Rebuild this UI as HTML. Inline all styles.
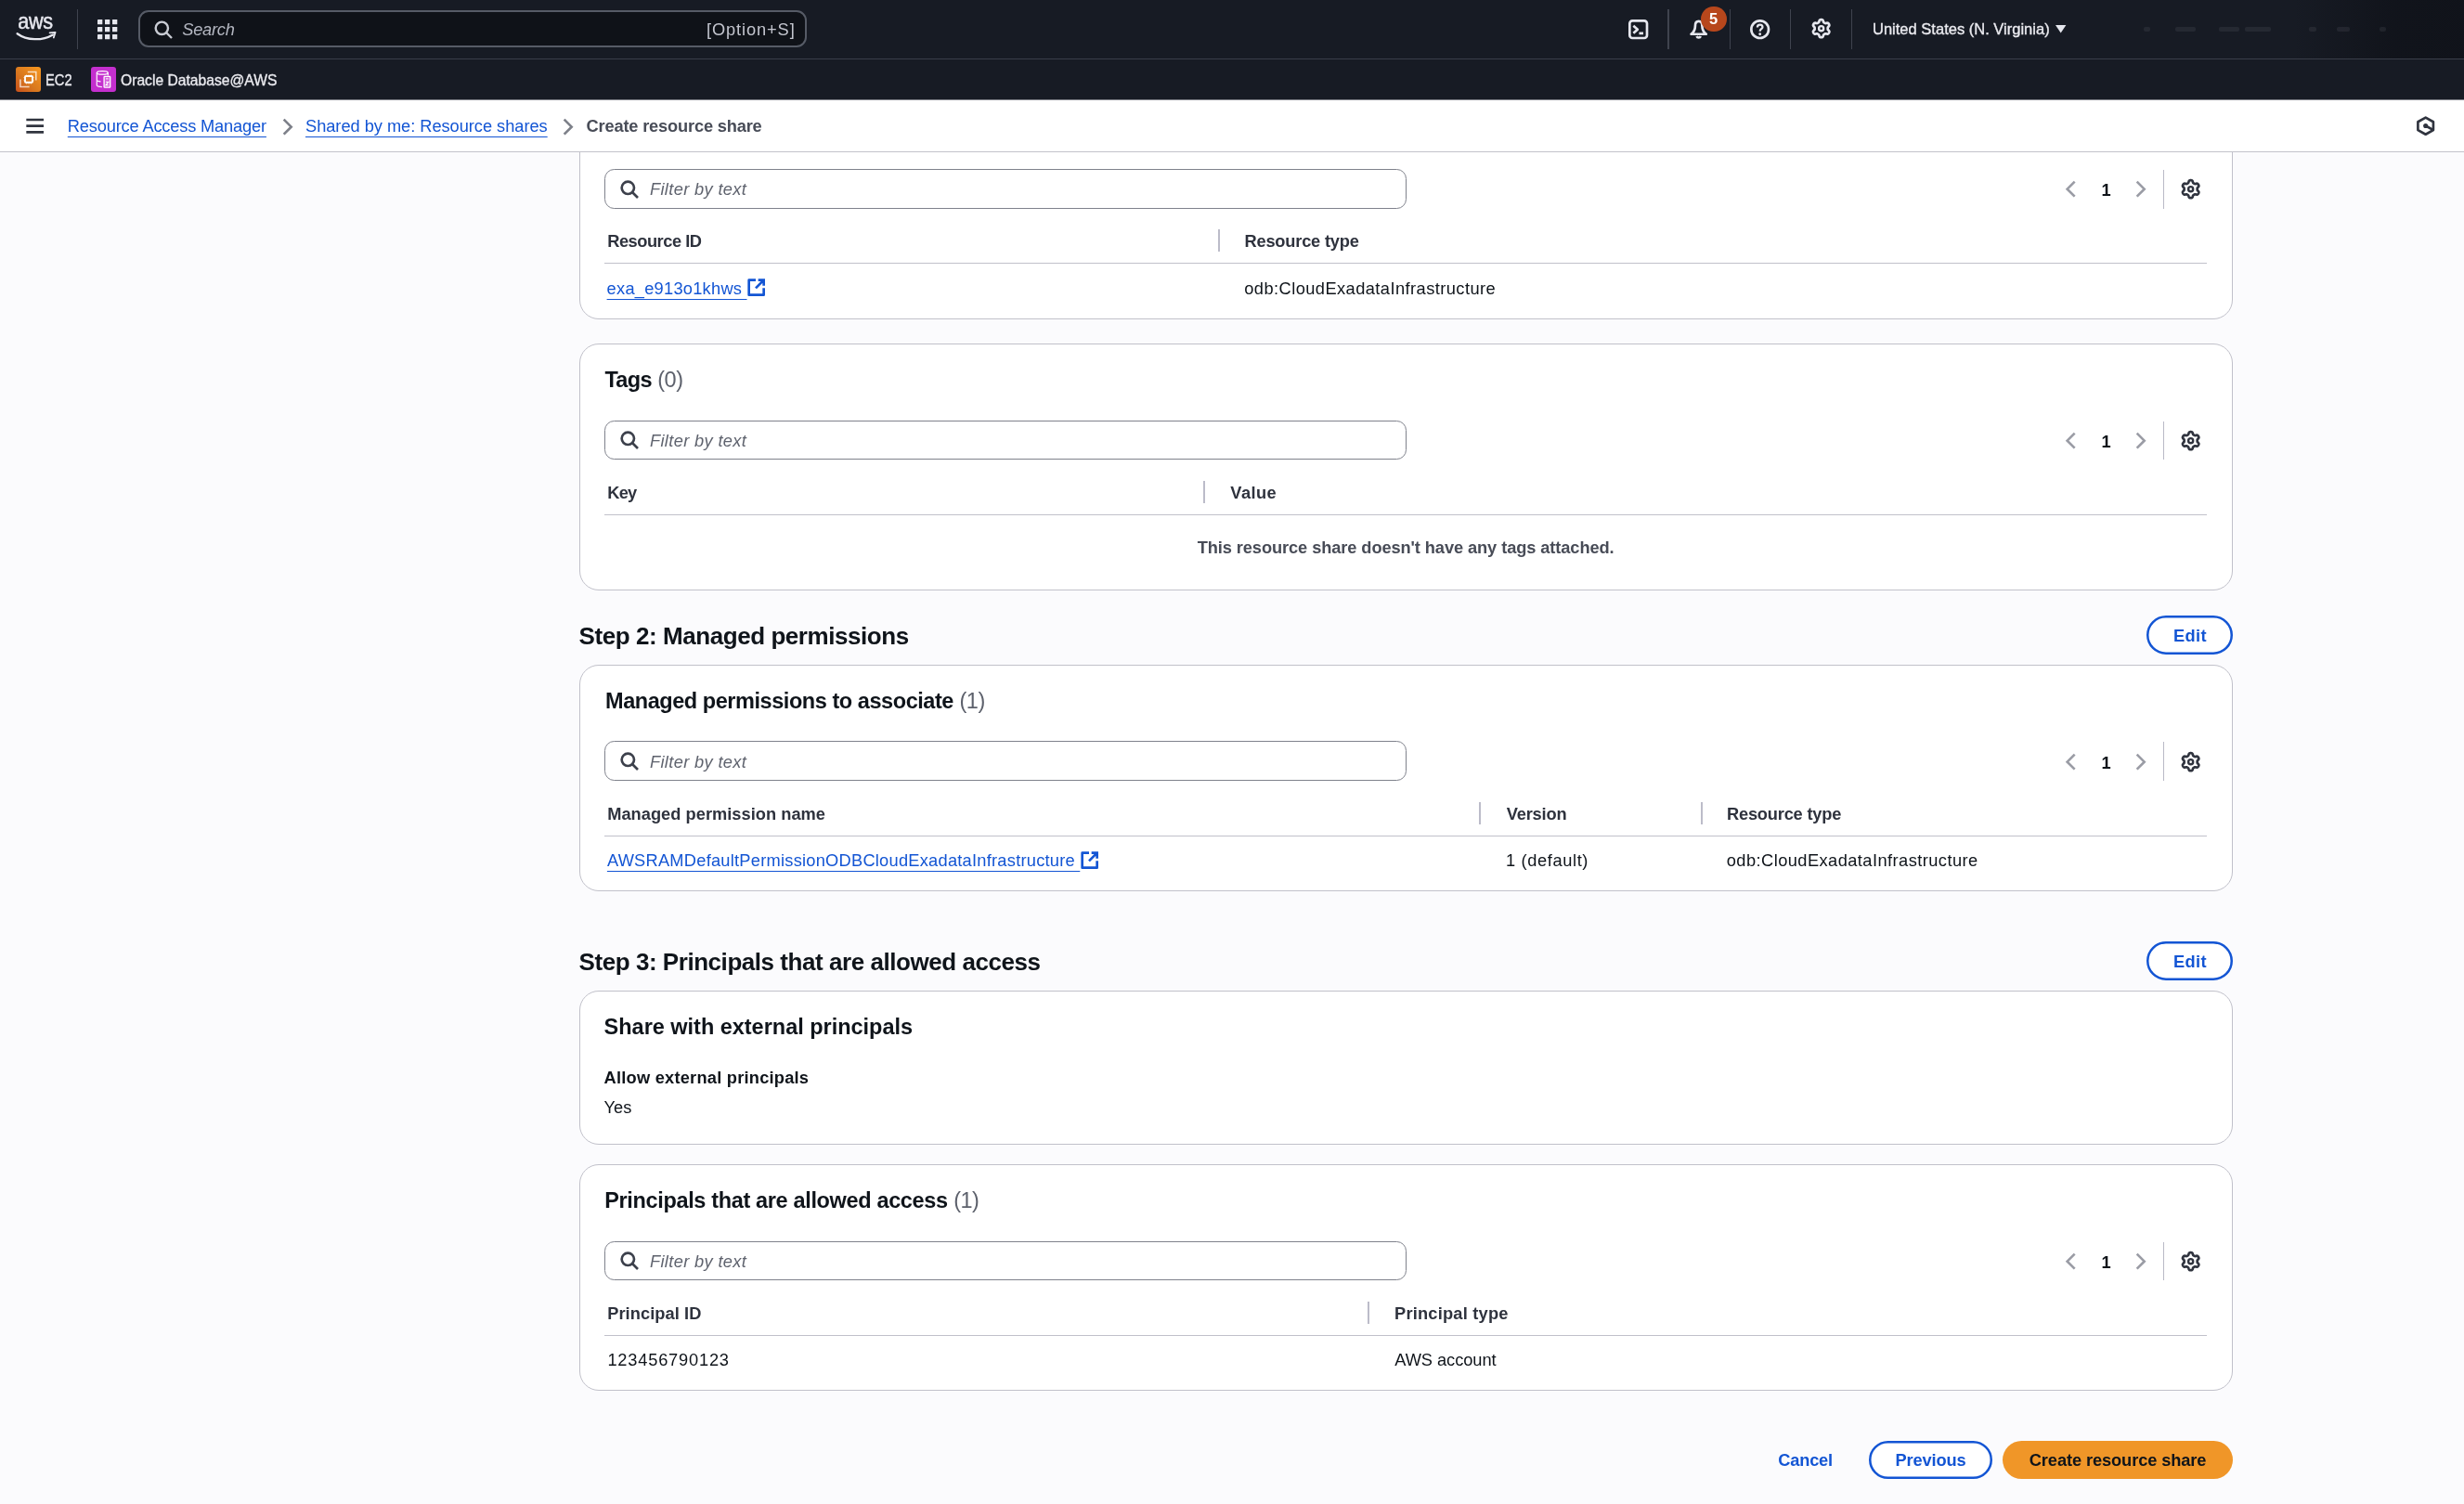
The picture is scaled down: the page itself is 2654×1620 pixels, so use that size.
<!DOCTYPE html>
<html lang="en">
<head>
<meta charset="utf-8">
<title>Create resource share | Resource Access Manager</title>
<style>
*{box-sizing:border-box}
html,body{margin:0;padding:0}
body{width:2654px;height:1620px;overflow:hidden;position:relative;background:#fbfbfd;font-family:"Liberation Sans", Arial, sans-serif;color:#0f141a;-webkit-font-smoothing:antialiased}
.t{position:absolute;white-space:pre;margin:0;text-decoration:none;font-weight:400}
.ul{text-decoration:underline;text-decoration-thickness:1.33px;text-underline-offset:4.8px}
.ic{position:absolute;overflow:visible;display:block}
.abs{position:absolute}
#nav{position:absolute;left:0;top:0;width:2654px;height:108px;background:#171b24;z-index:5;will-change:transform}
#nav .line{position:absolute;left:0;top:63px;width:100%;height:1px;background:#3a3e49}
#nav .vd{position:absolute;top:10px;width:1px;height:43px;background:#3f434e}
#srch{position:absolute;left:149px;top:11px;width:720px;height:40px;border:2px solid #565b66;border-radius:11px;background:#0f1218}
.fav{position:absolute;top:72px;width:27px;height:27px;border-radius:3px;overflow:hidden}
#badge{position:absolute;left:1832.3px;top:6.5px;width:27.4px;height:27.4px;border-radius:50%;background:#b7471c}
#shade{position:absolute;left:2470px;top:0;width:184px;height:63px;background:linear-gradient(90deg,rgba(12,14,20,0) 0%,rgba(12,14,20,.55) 60%,rgba(12,14,20,.6) 100%)}
.sm{position:absolute;top:29px;height:5px;background:rgba(190,192,205,.09);border-radius:2px}
#bc{position:absolute;left:0;top:108px;width:2654px;height:56px;background:#fff;border-bottom:1px solid #c3c3cb;z-index:4}
.card{position:absolute;left:624px;width:1781px;background:#fff;border:1px solid #c1c1ca;border-radius:21px}
.inp{position:absolute;left:651px;width:864px;border:1px solid #7f828c;border-radius:10.5px;background:#fff}
.hl{position:absolute;left:651px;width:1726px;height:1px;background:#c1c1ca}
.cd{position:absolute;width:2px;height:24px;background:#bcbcc9}
.pd{position:absolute;left:2330px;width:1px;background:#b9b9c6}
.btn{position:absolute;height:42px;border-radius:21px;border:2.5px solid #1355d4;background:#fff}
.btn.pri{border:none;background:#f09628}
</style>
</head>
<body>
<main>
<section class="card" style="top:100px;height:244px"></section>
<section class="card" style="top:370px;height:266px"></section>
<section class="card" style="top:716px;height:244px"></section>
<section class="card" style="top:1067px;height:166px"></section>
<section class="card" style="top:1254px;height:244px"></section>
<div class="inp" style="top:182px;height:43px"></div>
<div class="hl" style="top:283px"></div>
<div class="pd" style="top:183px;height:42px"></div>
<div class="inp" style="top:453px;height:42px"></div>
<div class="hl" style="top:554px"></div>
<div class="pd" style="top:454px;height:41px"></div>
<div class="inp" style="top:798px;height:43px"></div>
<div class="hl" style="top:900px"></div>
<div class="pd" style="top:799px;height:42px"></div>
<div class="inp" style="top:1337px;height:42px"></div>
<div class="hl" style="top:1438px"></div>
<div class="pd" style="top:1338px;height:41px"></div>
<div class="cd" style="left:1312px;top:247px"></div>
<div class="cd" style="left:1296px;top:518px"></div>
<div class="cd" style="left:1593px;top:864px"></div>
<div class="cd" style="left:1832px;top:864px"></div>
<div class="cd" style="left:1473px;top:1402px"></div>
<svg class="ic" style="left:2312px;top:662.8px;width:93px;height:42px" viewBox="0 0 93 42"><rect x="1.25" y="1.25" width="90.5" height="39.5" rx="19.75" fill="#fff" stroke="#1355d4" stroke-width="2.5"/></svg>
<svg class="ic" style="left:2312px;top:1013.8px;width:93px;height:42px" viewBox="0 0 93 42"><rect x="1.25" y="1.25" width="90.5" height="39.5" rx="19.75" fill="#fff" stroke="#1355d4" stroke-width="2.5"/></svg>
<svg class="ic" style="left:2013px;top:1552px;width:133px;height:41px" viewBox="0 0 133 41"><rect x="1.25" y="1.25" width="130.5" height="38.5" rx="19.25" fill="#fff" stroke="#1355d4" stroke-width="2.5"/></svg>
<div class="btn pri" style="left:2157px;top:1552px;width:248px;height:41px"></div>
<svg class="ic" style="left:666.70px;top:192.83px;width:21.333px;height:21.333px" viewBox="0 0 16 16" fill="none" stroke="#3c404b" stroke-width="2" ><circle cx="7" cy="7" r="5"/><path d="m15 15-4.5-4.5"/></svg>
<svg class="ic" style="left:2219.70px;top:192.93px;width:21.333px;height:21.333px" viewBox="0 0 16 16" fill="none" stroke="#9a9ca5" stroke-width="2" ><path d="M11 2 5 8l6 6"/></svg>
<svg class="ic" style="left:2295.20px;top:192.93px;width:21.333px;height:21.333px" viewBox="0 0 16 16" fill="none" stroke="#9a9ca5" stroke-width="2" ><path d="m5 2 6 6-6 6"/></svg>
<svg class="ic" style="left:2348.90px;top:192.93px;width:21.333px;height:21.333px" viewBox="0 0 16 16" fill="none" stroke="#30343f" stroke-width="2" ><path d="M13.25 8.00L13.25 7.77L13.26 7.54L13.29 7.30L13.38 7.05L13.61 6.76L13.99 6.40L14.34 6.00L14.52 5.63L14.53 5.30L14.45 4.99L14.34 4.70L14.19 4.43L14.03 4.16L13.83 3.91L13.61 3.70L13.31 3.54L12.90 3.51L12.38 3.62L11.88 3.76L11.51 3.81L11.25 3.77L11.03 3.68L10.82 3.57L10.62 3.45L10.43 3.34L10.23 3.22L10.04 3.07L9.87 2.86L9.73 2.52L9.60 2.01L9.44 1.51L9.20 1.17L8.92 0.99L8.62 0.90L8.31 0.86L8.00 0.85L7.69 0.86L7.38 0.90L7.08 0.99L6.80 1.17L6.56 1.51L6.40 2.01L6.27 2.52L6.13 2.86L5.96 3.07L5.77 3.22L5.57 3.34L5.38 3.45L5.18 3.57L4.97 3.68L4.75 3.77L4.49 3.81L4.12 3.76L3.62 3.62L3.10 3.51L2.69 3.54L2.39 3.70L2.17 3.91L1.97 4.16L1.81 4.42L1.66 4.70L1.55 4.99L1.47 5.30L1.48 5.63L1.66 6.00L2.01 6.40L2.39 6.76L2.62 7.05L2.71 7.30L2.74 7.54L2.75 7.77L2.75 8.00L2.75 8.23L2.74 8.46L2.71 8.70L2.62 8.95L2.39 9.24L2.01 9.60L1.66 10.00L1.48 10.37L1.47 10.70L1.55 11.01L1.66 11.30L1.81 11.58L1.97 11.84L2.17 12.09L2.39 12.30L2.69 12.46L3.10 12.49L3.62 12.38L4.12 12.24L4.49 12.19L4.75 12.23L4.97 12.32L5.18 12.43L5.37 12.55L5.57 12.66L5.77 12.78L5.96 12.93L6.13 13.14L6.27 13.48L6.40 13.99L6.56 14.49L6.80 14.83L7.08 15.01L7.38 15.10L7.69 15.14L8.00 15.15L8.31 15.14L8.62 15.10L8.92 15.01L9.20 14.83L9.44 14.49L9.60 13.99L9.73 13.48L9.87 13.14L10.04 12.93L10.23 12.78L10.43 12.66L10.62 12.55L10.82 12.43L11.03 12.32L11.25 12.23L11.51 12.19L11.88 12.24L12.38 12.38L12.90 12.49L13.31 12.46L13.61 12.30L13.83 12.09L14.03 11.84L14.19 11.57L14.34 11.30L14.45 11.01L14.53 10.70L14.52 10.37L14.34 10.00L13.99 9.60L13.61 9.24L13.38 8.95L13.29 8.70L13.26 8.46L13.25 8.23Z" stroke-linejoin="round"/><circle cx="8" cy="8" r="1.9" stroke-width="1.8"/></svg>
<svg class="ic" style="left:666.70px;top:463.33px;width:21.333px;height:21.333px" viewBox="0 0 16 16" fill="none" stroke="#3c404b" stroke-width="2" ><circle cx="7" cy="7" r="5"/><path d="m15 15-4.5-4.5"/></svg>
<svg class="ic" style="left:2219.70px;top:464.33px;width:21.333px;height:21.333px" viewBox="0 0 16 16" fill="none" stroke="#9a9ca5" stroke-width="2" ><path d="M11 2 5 8l6 6"/></svg>
<svg class="ic" style="left:2295.20px;top:464.33px;width:21.333px;height:21.333px" viewBox="0 0 16 16" fill="none" stroke="#9a9ca5" stroke-width="2" ><path d="m5 2 6 6-6 6"/></svg>
<svg class="ic" style="left:2348.90px;top:464.33px;width:21.333px;height:21.333px" viewBox="0 0 16 16" fill="none" stroke="#30343f" stroke-width="2" ><path d="M13.25 8.00L13.25 7.77L13.26 7.54L13.29 7.30L13.38 7.05L13.61 6.76L13.99 6.40L14.34 6.00L14.52 5.63L14.53 5.30L14.45 4.99L14.34 4.70L14.19 4.43L14.03 4.16L13.83 3.91L13.61 3.70L13.31 3.54L12.90 3.51L12.38 3.62L11.88 3.76L11.51 3.81L11.25 3.77L11.03 3.68L10.82 3.57L10.62 3.45L10.43 3.34L10.23 3.22L10.04 3.07L9.87 2.86L9.73 2.52L9.60 2.01L9.44 1.51L9.20 1.17L8.92 0.99L8.62 0.90L8.31 0.86L8.00 0.85L7.69 0.86L7.38 0.90L7.08 0.99L6.80 1.17L6.56 1.51L6.40 2.01L6.27 2.52L6.13 2.86L5.96 3.07L5.77 3.22L5.57 3.34L5.38 3.45L5.18 3.57L4.97 3.68L4.75 3.77L4.49 3.81L4.12 3.76L3.62 3.62L3.10 3.51L2.69 3.54L2.39 3.70L2.17 3.91L1.97 4.16L1.81 4.42L1.66 4.70L1.55 4.99L1.47 5.30L1.48 5.63L1.66 6.00L2.01 6.40L2.39 6.76L2.62 7.05L2.71 7.30L2.74 7.54L2.75 7.77L2.75 8.00L2.75 8.23L2.74 8.46L2.71 8.70L2.62 8.95L2.39 9.24L2.01 9.60L1.66 10.00L1.48 10.37L1.47 10.70L1.55 11.01L1.66 11.30L1.81 11.58L1.97 11.84L2.17 12.09L2.39 12.30L2.69 12.46L3.10 12.49L3.62 12.38L4.12 12.24L4.49 12.19L4.75 12.23L4.97 12.32L5.18 12.43L5.37 12.55L5.57 12.66L5.77 12.78L5.96 12.93L6.13 13.14L6.27 13.48L6.40 13.99L6.56 14.49L6.80 14.83L7.08 15.01L7.38 15.10L7.69 15.14L8.00 15.15L8.31 15.14L8.62 15.10L8.92 15.01L9.20 14.83L9.44 14.49L9.60 13.99L9.73 13.48L9.87 13.14L10.04 12.93L10.23 12.78L10.43 12.66L10.62 12.55L10.82 12.43L11.03 12.32L11.25 12.23L11.51 12.19L11.88 12.24L12.38 12.38L12.90 12.49L13.31 12.46L13.61 12.30L13.83 12.09L14.03 11.84L14.19 11.57L14.34 11.30L14.45 11.01L14.53 10.70L14.52 10.37L14.34 10.00L13.99 9.60L13.61 9.24L13.38 8.95L13.29 8.70L13.26 8.46L13.25 8.23Z" stroke-linejoin="round"/><circle cx="8" cy="8" r="1.9" stroke-width="1.8"/></svg>
<svg class="ic" style="left:666.70px;top:808.83px;width:21.333px;height:21.333px" viewBox="0 0 16 16" fill="none" stroke="#3c404b" stroke-width="2" ><circle cx="7" cy="7" r="5"/><path d="m15 15-4.5-4.5"/></svg>
<svg class="ic" style="left:2219.70px;top:809.93px;width:21.333px;height:21.333px" viewBox="0 0 16 16" fill="none" stroke="#9a9ca5" stroke-width="2" ><path d="M11 2 5 8l6 6"/></svg>
<svg class="ic" style="left:2295.20px;top:809.93px;width:21.333px;height:21.333px" viewBox="0 0 16 16" fill="none" stroke="#9a9ca5" stroke-width="2" ><path d="m5 2 6 6-6 6"/></svg>
<svg class="ic" style="left:2348.90px;top:809.93px;width:21.333px;height:21.333px" viewBox="0 0 16 16" fill="none" stroke="#30343f" stroke-width="2" ><path d="M13.25 8.00L13.25 7.77L13.26 7.54L13.29 7.30L13.38 7.05L13.61 6.76L13.99 6.40L14.34 6.00L14.52 5.63L14.53 5.30L14.45 4.99L14.34 4.70L14.19 4.43L14.03 4.16L13.83 3.91L13.61 3.70L13.31 3.54L12.90 3.51L12.38 3.62L11.88 3.76L11.51 3.81L11.25 3.77L11.03 3.68L10.82 3.57L10.62 3.45L10.43 3.34L10.23 3.22L10.04 3.07L9.87 2.86L9.73 2.52L9.60 2.01L9.44 1.51L9.20 1.17L8.92 0.99L8.62 0.90L8.31 0.86L8.00 0.85L7.69 0.86L7.38 0.90L7.08 0.99L6.80 1.17L6.56 1.51L6.40 2.01L6.27 2.52L6.13 2.86L5.96 3.07L5.77 3.22L5.57 3.34L5.38 3.45L5.18 3.57L4.97 3.68L4.75 3.77L4.49 3.81L4.12 3.76L3.62 3.62L3.10 3.51L2.69 3.54L2.39 3.70L2.17 3.91L1.97 4.16L1.81 4.42L1.66 4.70L1.55 4.99L1.47 5.30L1.48 5.63L1.66 6.00L2.01 6.40L2.39 6.76L2.62 7.05L2.71 7.30L2.74 7.54L2.75 7.77L2.75 8.00L2.75 8.23L2.74 8.46L2.71 8.70L2.62 8.95L2.39 9.24L2.01 9.60L1.66 10.00L1.48 10.37L1.47 10.70L1.55 11.01L1.66 11.30L1.81 11.58L1.97 11.84L2.17 12.09L2.39 12.30L2.69 12.46L3.10 12.49L3.62 12.38L4.12 12.24L4.49 12.19L4.75 12.23L4.97 12.32L5.18 12.43L5.37 12.55L5.57 12.66L5.77 12.78L5.96 12.93L6.13 13.14L6.27 13.48L6.40 13.99L6.56 14.49L6.80 14.83L7.08 15.01L7.38 15.10L7.69 15.14L8.00 15.15L8.31 15.14L8.62 15.10L8.92 15.01L9.20 14.83L9.44 14.49L9.60 13.99L9.73 13.48L9.87 13.14L10.04 12.93L10.23 12.78L10.43 12.66L10.62 12.55L10.82 12.43L11.03 12.32L11.25 12.23L11.51 12.19L11.88 12.24L12.38 12.38L12.90 12.49L13.31 12.46L13.61 12.30L13.83 12.09L14.03 11.84L14.19 11.57L14.34 11.30L14.45 11.01L14.53 10.70L14.52 10.37L14.34 10.00L13.99 9.60L13.61 9.24L13.38 8.95L13.29 8.70L13.26 8.46L13.25 8.23Z" stroke-linejoin="round"/><circle cx="8" cy="8" r="1.9" stroke-width="1.8"/></svg>
<svg class="ic" style="left:666.70px;top:1347.23px;width:21.333px;height:21.333px" viewBox="0 0 16 16" fill="none" stroke="#3c404b" stroke-width="2" ><circle cx="7" cy="7" r="5"/><path d="m15 15-4.5-4.5"/></svg>
<svg class="ic" style="left:2219.70px;top:1348.23px;width:21.333px;height:21.333px" viewBox="0 0 16 16" fill="none" stroke="#9a9ca5" stroke-width="2" ><path d="M11 2 5 8l6 6"/></svg>
<svg class="ic" style="left:2295.20px;top:1348.23px;width:21.333px;height:21.333px" viewBox="0 0 16 16" fill="none" stroke="#9a9ca5" stroke-width="2" ><path d="m5 2 6 6-6 6"/></svg>
<svg class="ic" style="left:2348.90px;top:1348.23px;width:21.333px;height:21.333px" viewBox="0 0 16 16" fill="none" stroke="#30343f" stroke-width="2" ><path d="M13.25 8.00L13.25 7.77L13.26 7.54L13.29 7.30L13.38 7.05L13.61 6.76L13.99 6.40L14.34 6.00L14.52 5.63L14.53 5.30L14.45 4.99L14.34 4.70L14.19 4.43L14.03 4.16L13.83 3.91L13.61 3.70L13.31 3.54L12.90 3.51L12.38 3.62L11.88 3.76L11.51 3.81L11.25 3.77L11.03 3.68L10.82 3.57L10.62 3.45L10.43 3.34L10.23 3.22L10.04 3.07L9.87 2.86L9.73 2.52L9.60 2.01L9.44 1.51L9.20 1.17L8.92 0.99L8.62 0.90L8.31 0.86L8.00 0.85L7.69 0.86L7.38 0.90L7.08 0.99L6.80 1.17L6.56 1.51L6.40 2.01L6.27 2.52L6.13 2.86L5.96 3.07L5.77 3.22L5.57 3.34L5.38 3.45L5.18 3.57L4.97 3.68L4.75 3.77L4.49 3.81L4.12 3.76L3.62 3.62L3.10 3.51L2.69 3.54L2.39 3.70L2.17 3.91L1.97 4.16L1.81 4.42L1.66 4.70L1.55 4.99L1.47 5.30L1.48 5.63L1.66 6.00L2.01 6.40L2.39 6.76L2.62 7.05L2.71 7.30L2.74 7.54L2.75 7.77L2.75 8.00L2.75 8.23L2.74 8.46L2.71 8.70L2.62 8.95L2.39 9.24L2.01 9.60L1.66 10.00L1.48 10.37L1.47 10.70L1.55 11.01L1.66 11.30L1.81 11.58L1.97 11.84L2.17 12.09L2.39 12.30L2.69 12.46L3.10 12.49L3.62 12.38L4.12 12.24L4.49 12.19L4.75 12.23L4.97 12.32L5.18 12.43L5.37 12.55L5.57 12.66L5.77 12.78L5.96 12.93L6.13 13.14L6.27 13.48L6.40 13.99L6.56 14.49L6.80 14.83L7.08 15.01L7.38 15.10L7.69 15.14L8.00 15.15L8.31 15.14L8.62 15.10L8.92 15.01L9.20 14.83L9.44 14.49L9.60 13.99L9.73 13.48L9.87 13.14L10.04 12.93L10.23 12.78L10.43 12.66L10.62 12.55L10.82 12.43L11.03 12.32L11.25 12.23L11.51 12.19L11.88 12.24L12.38 12.38L12.90 12.49L13.31 12.46L13.61 12.30L13.83 12.09L14.03 11.84L14.19 11.57L14.34 11.30L14.45 11.01L14.53 10.70L14.52 10.37L14.34 10.00L13.99 9.60L13.61 9.24L13.38 8.95L13.29 8.70L13.26 8.46L13.25 8.23Z" stroke-linejoin="round"/><circle cx="8" cy="8" r="1.9" stroke-width="1.8"/></svg>
<svg class="ic" style="left:803.70px;top:298.70px;width:21.333px;height:21.333px" viewBox="0 0 16 16" fill="none" stroke="#1355d4" stroke-width="2" ><path d="M14 8.5V14H2V2h5.5" stroke-linejoin="round"/><path d="M9.5 2H14v4.5M14 2 7.5 8.5" stroke-linejoin="miter"/></svg>
<svg class="ic" style="left:1163.00px;top:916.20px;width:21.333px;height:21.333px" viewBox="0 0 16 16" fill="none" stroke="#1355d4" stroke-width="2" ><path d="M14 8.5V14H2V2h5.5" stroke-linejoin="round"/><path d="M9.5 2H14v4.5M14 2 7.5 8.5" stroke-linejoin="miter"/></svg>
</main>
<header id="nav">
<div id="srch"></div>
<div class="line"></div>
<div id="shade"></div>
<div style="position:absolute;left:0;top:107px;width:100%;height:1px;background:#84868c"></div>
<div class="vd" style="left:83px;width:1px"></div>
<div class="vd" style="left:1796px;width:2px"></div>
<div class="vd" style="left:1863px;width:1px"></div>
<div class="vd" style="left:1928px;width:1px"></div>
<div class="vd" style="left:1994px;width:1px"></div>
<div class="fav" style="left:17px;background:linear-gradient(45deg,#c7501b 0%,#d9791f 45%,#f8981f 100%)"><svg viewBox="0 0 27 27" width="27" height="27" fill="none" stroke="#fff" stroke-width="1.5"><path d="M12.8 5.4h9v9.2" opacity=".72"/><path d="M4.9 13.5v8h9.7" opacity=".72"/><rect x="10" y="10" width="8" height="6.8" rx=".8" stroke-width="1.9"/><path d="M11.6 8.6v1M14 8.6v1M16.4 8.6v1M11.6 17.4v1M14 17.4v1M16.4 17.4v1M8.6 11.6h1M8.6 14.8h1M18.4 11.6h1M18.4 14.8h1" stroke-width=".9"/></svg></div>
<div class="fav" style="left:98px;background:#c42fce"><svg viewBox="0 0 27 27" width="27" height="27" fill="none" stroke="#fff" stroke-width="1.3"><ellipse cx="12.3" cy="6.4" rx="6" ry="1.8"/><path d="M6.3 6.4v13.4c0 1 2.5 1.8 5.6 1.9M18.3 6.4v3M6.3 14.2c0 .8 1.7 1.4 4.2 1.6" opacity=".9"/><rect x="14.1" y="10.4" width="6.6" height="11.8" rx=".6" fill="#d65fdd" stroke-width="1.3"/><path d="M16 12.9h2.8" stroke-width="1"/><path d="M16 16.3h2.8l-2.8 3.4h2.8" stroke-width="1.1"/></svg></div>
<svg class="ic" style="left:16px;top:14px;width:48px;height:34px" viewBox="0 0 48 34"><text transform="translate(3.2 17.3) scale(.9 1)" font-family='"Liberation Sans", Arial, sans-serif' font-size="24" font-weight="400" letter-spacing="-0.35" fill="#e6e7ee" stroke="#e6e7ee" stroke-width="0.5">aws</text><path d="M2.6 22.2C13 29.8 29 30.2 41 23.4" fill="none" stroke="#e6e7ee" stroke-width="2.3" stroke-linecap="round"/><path d="M37.6 21.4l6-.6-1.8 5.7" fill="none" stroke="#e6e7ee" stroke-width="1.8" stroke-linecap="round" stroke-linejoin="round"/></svg>
<svg class="ic" style="left:104.7px;top:21px;width:21.3px;height:21.3px" viewBox="0 0 21.3 21.3" fill="#e6e7ee"><rect x="0.0" y="0.0" width="5.3" height="5.3" rx="0.4"/><rect x="8.0" y="0.0" width="5.3" height="5.3" rx="0.4"/><rect x="16.0" y="0.0" width="5.3" height="5.3" rx="0.4"/><rect x="0.0" y="8.0" width="5.3" height="5.3" rx="0.4"/><rect x="8.0" y="8.0" width="5.3" height="5.3" rx="0.4"/><rect x="16.0" y="8.0" width="5.3" height="5.3" rx="0.4"/><rect x="0.0" y="16.0" width="5.3" height="5.3" rx="0.4"/><rect x="8.0" y="16.0" width="5.3" height="5.3" rx="0.4"/><rect x="16.0" y="16.0" width="5.3" height="5.3" rx="0.4"/></svg>
<svg class="ic" style="left:165.00px;top:21.20px;width:21.333px;height:21.333px" viewBox="0 0 16 16" fill="none" stroke="#c9ccd4" stroke-width="1.8" ><circle cx="7" cy="7" r="5"/><path d="m15 15-4.5-4.5"/></svg>
<svg class="ic" style="left:1753.80px;top:20.90px;width:21.333px;height:21.333px" viewBox="0 0 16 16" fill="none" stroke="#e6e7ee" stroke-width="2" ><rect x="1" y="1" width="14" height="14" rx="2.2"/><path d="m4 5 3.4 3L4 11M8.6 11.2h3.4" stroke-linejoin="round"/></svg>
<svg class="ic" style="left:1819.00px;top:20.50px;width:21.333px;height:21.333px" viewBox="0 0 16 16" fill="none" stroke="#e6e7ee" stroke-width="2" ><path d="M8 1.4C5.9 1.4 5.2 3.2 5.2 5.2C5.2 8.5 4 10.2 1.9 11.8H14.1C12 10.2 10.8 8.5 10.8 5.2C10.8 3.2 10.1 1.4 8 1.4Z" stroke-linejoin="round"/><path d="M6.4 13.5a1.7 1.7 0 0 0 3.2 0"/></svg>
<svg class="ic" style="left:1885px;top:20.9px;width:21.333px;height:21.333px" viewBox="0 0 16 16" fill="none" stroke="#e6e7ee" stroke-width="2"><circle cx="8" cy="8" r="7"/><path d="M5.9 6.3c0-1.2.9-2 2.1-2s2.1.8 2.1 1.9c0 1.4-2.1 1.6-2.1 3.3" stroke-width="1.7"/><circle cx="8" cy="11.8" r="1.05" fill="#e6e7ee" stroke="none"/></svg>
<svg class="ic" style="left:1950.90px;top:19.90px;width:21.333px;height:21.333px" viewBox="0 0 16 16" fill="none" stroke="#e6e7ee" stroke-width="2" ><path d="M13.25 8.00L13.25 7.77L13.26 7.54L13.29 7.30L13.38 7.05L13.61 6.76L13.99 6.40L14.34 6.00L14.52 5.63L14.53 5.30L14.45 4.99L14.34 4.70L14.19 4.43L14.03 4.16L13.83 3.91L13.61 3.70L13.31 3.54L12.90 3.51L12.38 3.62L11.88 3.76L11.51 3.81L11.25 3.77L11.03 3.68L10.82 3.57L10.62 3.45L10.43 3.34L10.23 3.22L10.04 3.07L9.87 2.86L9.73 2.52L9.60 2.01L9.44 1.51L9.20 1.17L8.92 0.99L8.62 0.90L8.31 0.86L8.00 0.85L7.69 0.86L7.38 0.90L7.08 0.99L6.80 1.17L6.56 1.51L6.40 2.01L6.27 2.52L6.13 2.86L5.96 3.07L5.77 3.22L5.57 3.34L5.38 3.45L5.18 3.57L4.97 3.68L4.75 3.77L4.49 3.81L4.12 3.76L3.62 3.62L3.10 3.51L2.69 3.54L2.39 3.70L2.17 3.91L1.97 4.16L1.81 4.42L1.66 4.70L1.55 4.99L1.47 5.30L1.48 5.63L1.66 6.00L2.01 6.40L2.39 6.76L2.62 7.05L2.71 7.30L2.74 7.54L2.75 7.77L2.75 8.00L2.75 8.23L2.74 8.46L2.71 8.70L2.62 8.95L2.39 9.24L2.01 9.60L1.66 10.00L1.48 10.37L1.47 10.70L1.55 11.01L1.66 11.30L1.81 11.58L1.97 11.84L2.17 12.09L2.39 12.30L2.69 12.46L3.10 12.49L3.62 12.38L4.12 12.24L4.49 12.19L4.75 12.23L4.97 12.32L5.18 12.43L5.37 12.55L5.57 12.66L5.77 12.78L5.96 12.93L6.13 13.14L6.27 13.48L6.40 13.99L6.56 14.49L6.80 14.83L7.08 15.01L7.38 15.10L7.69 15.14L8.00 15.15L8.31 15.14L8.62 15.10L8.92 15.01L9.20 14.83L9.44 14.49L9.60 13.99L9.73 13.48L9.87 13.14L10.04 12.93L10.23 12.78L10.43 12.66L10.62 12.55L10.82 12.43L11.03 12.32L11.25 12.23L11.51 12.19L11.88 12.24L12.38 12.38L12.90 12.49L13.31 12.46L13.61 12.30L13.83 12.09L14.03 11.84L14.19 11.57L14.34 11.30L14.45 11.01L14.53 10.70L14.52 10.37L14.34 10.00L13.99 9.60L13.61 9.24L13.38 8.95L13.29 8.70L13.26 8.46L13.25 8.23Z" stroke-linejoin="round"/><circle cx="8" cy="8" r="1.9" stroke-width="1.8"/></svg>
<svg class="ic" style="left:2214px;top:27px;width:11.4px;height:8.4px" viewBox="0 0 11.4 8.4"><path d="M0 0h11.4L5.7 8.4Z" fill="#e6e7ee"/></svg>
<div id="badge"></div>
<div class="sm" style="left:2309px;width:7px"></div>
<div class="sm" style="left:2343px;width:22px"></div>
<div class="sm" style="left:2390px;width:22px"></div>
<div class="sm" style="left:2418px;width:28px"></div>
<div class="sm" style="left:2487px;width:8px"></div>
<div class="sm" style="left:2517px;width:14px"></div>
<div class="sm" style="left:2563px;width:7px"></div>
</header>
<nav id="bc"></nav>
<div style="position:absolute;left:0;top:0;z-index:6"><svg class="ic" style="left:27.00px;top:125.30px;width:21.333px;height:21.333px" viewBox="0 0 16 16" fill="none" stroke="#30343f" stroke-width="2" ><path d="M15 8H1M15 3H1M15 13H1"/></svg>
<svg class="ic" style="left:299.00px;top:125.90px;width:21.333px;height:21.333px" viewBox="0 0 16 16" fill="none" stroke="#7d8089" stroke-width="2" ><path d="m5 2 6 6-6 6"/></svg>
<svg class="ic" style="left:600.70px;top:125.90px;width:21.333px;height:21.333px" viewBox="0 0 16 16" fill="none" stroke="#7d8089" stroke-width="2" ><path d="m5 2 6 6-6 6"/></svg>
<svg class="ic" style="left:2602.00px;top:124.80px;width:21.333px;height:21.333px" viewBox="0 0 16 16" fill="none" stroke="#30343f" stroke-width="2" ><path d="M8 1.2 14.2 4.7v6.6L8 14.8 1.8 11.3V4.7Z" stroke-linejoin="round"/><circle cx="8" cy="7.9" r="1.9" fill="#30343f" stroke="none"/><path d="M8 7.9l6 3.3"/></svg></div>
<div id="txt" style="position:absolute;left:0;top:0;z-index:6;will-change:transform">
<span class="t" style="left:196.25px;top:19.50px;font-size:18.25px;line-height:24px;letter-spacing:-0.250px;color:#b3b6c0;font-style:italic;">Search</span>
<span class="t" style="left:761.00px;top:19.50px;font-size:18.25px;line-height:24px;letter-spacing:0.889px;color:#c3c5ce;">[Option+S]</span>
<span class="t" style="left:48.89px;top:75.50px;font-size:17px;line-height:22px;color:#ebebf0;transform-origin:0 0;transform:scaleX(0.8629);-webkit-text-stroke:.35px #ebebf0;">EC2</span>
<span class="t" style="left:129.68px;top:75.50px;font-size:17px;line-height:22px;color:#ebebf0;transform-origin:0 0;transform:scaleX(0.9204);-webkit-text-stroke:.35px #ebebf0;">Oracle Database@AWS</span>
<span class="t" style="left:2016.53px;top:20.50px;font-size:17px;line-height:22px;color:#ebebf0;transform-origin:0 0;transform:scaleX(0.9716);-webkit-text-stroke:.35px #ebebf0;">United States (N. Virginia)</span>
<a href="#" class="t ul" style="left:72.80px;top:123.50px;font-size:18.25px;line-height:24px;letter-spacing:-0.173px;color:#1355d4;">Resource Access Manager</a>
<a href="#" class="t ul" style="left:329.00px;top:123.50px;font-size:18.25px;line-height:24px;letter-spacing:-0.036px;color:#1355d4;">Shared by me: Resource shares</a>
<span class="t" style="left:631.50px;top:123.50px;font-size:18.25px;line-height:24px;letter-spacing:-0.175px;color:#484c57;font-weight:700;">Create resource share</span>
<span class="t" style="left:699.90px;top:191.50px;font-size:18.25px;line-height:24px;letter-spacing:0.354px;color:#5f636e;font-style:italic;">Filter by text</span>
<span class="t" style="left:654.20px;top:247.50px;font-size:18.25px;line-height:24px;letter-spacing:-0.470px;color:#2e323d;font-weight:700;">Resource ID</span>
<span class="t" style="left:1340.50px;top:247.50px;font-size:18.25px;line-height:24px;letter-spacing:-0.208px;color:#2e323d;font-weight:700;">Resource type</span>
<a href="#" class="t ul" style="left:653.60px;top:298.50px;font-size:18.25px;line-height:24px;letter-spacing:0.254px;color:#1355d4;">exa_e913o1khws </a>
<span class="t" style="left:1340.25px;top:298.50px;font-size:18.25px;line-height:24px;letter-spacing:0.440px;color:#0f141a;">odb:CloudExadataInfrastructure</span>
<span class="t" style="left:2263.50px;top:192.50px;font-size:18.25px;line-height:24px;letter-spacing:-1.400px;color:#0f141a;font-weight:700;">1</span>
<span class="t" style="left:651.40px;top:393.50px;font-size:23.5px;line-height:31px;letter-spacing:-0.667px;color:#0f141a;font-weight:700;">Tags</span>
<span class="t" style="left:708.25px;top:393.50px;font-size:23.5px;line-height:31px;letter-spacing:-0.500px;color:#5d616c;">(0)</span>
<span class="t" style="left:699.90px;top:462.50px;font-size:18.25px;line-height:24px;letter-spacing:0.354px;color:#5f636e;font-style:italic;">Filter by text</span>
<span class="t" style="left:654.20px;top:518.50px;font-size:18.25px;line-height:24px;letter-spacing:-0.700px;color:#2e323d;font-weight:700;">Key</span>
<span class="t" style="left:1325.30px;top:518.50px;font-size:18.25px;line-height:24px;letter-spacing:0.425px;color:#2e323d;font-weight:700;">Value</span>
<span class="t" style="left:1289.70px;top:577.50px;font-size:18.25px;line-height:24px;letter-spacing:-0.094px;color:#484c57;font-weight:700;">This resource share doesn&#x27;t have any tags attached.</span>
<span class="t" style="left:2263.50px;top:463.50px;font-size:18.25px;line-height:24px;letter-spacing:-1.400px;color:#0f141a;font-weight:700;">1</span>
<h2 class="t" style="left:623.60px;top:668.00px;font-size:26px;line-height:34px;letter-spacing:-0.438px;color:#0f141a;font-weight:700;">Step 2: Managed permissions</h2>
<span class="t" style="left:2341.00px;top:672.50px;font-size:18.25px;line-height:24px;letter-spacing:0.333px;color:#1355d4;font-weight:700;">Edit</span>
<span class="t" style="left:652.00px;top:739.50px;font-size:23.5px;line-height:31px;letter-spacing:-0.444px;color:#0f141a;font-weight:700;">Managed permissions to associate</span>
<span class="t" style="left:1033.50px;top:739.50px;font-size:23.5px;line-height:31px;letter-spacing:-0.500px;color:#5d616c;">(1)</span>
<span class="t" style="left:699.90px;top:808.50px;font-size:18.25px;line-height:24px;letter-spacing:0.354px;color:#5f636e;font-style:italic;">Filter by text</span>
<span class="t" style="left:654.20px;top:864.50px;font-size:18.25px;line-height:24px;letter-spacing:0.023px;color:#2e323d;font-weight:700;">Managed permission name</span>
<span class="t" style="left:1622.70px;top:864.50px;font-size:18.25px;line-height:24px;letter-spacing:-0.167px;color:#2e323d;font-weight:700;">Version</span>
<span class="t" style="left:1860.00px;top:864.50px;font-size:18.25px;line-height:24px;letter-spacing:-0.208px;color:#2e323d;font-weight:700;">Resource type</span>
<a href="#" class="t ul" style="left:653.90px;top:914.50px;font-size:18.25px;line-height:24px;letter-spacing:0.247px;color:#1355d4;">AWSRAMDefaultPermissionODBCloudExadataInfrastructure </a>
<span class="t" style="left:1622.00px;top:914.50px;font-size:18.25px;line-height:24px;letter-spacing:0.625px;color:#0f141a;">1 (default)</span>
<span class="t" style="left:1859.75px;top:914.50px;font-size:18.25px;line-height:24px;letter-spacing:0.440px;color:#0f141a;">odb:CloudExadataInfrastructure</span>
<span class="t" style="left:2263.50px;top:809.50px;font-size:18.25px;line-height:24px;letter-spacing:-1.400px;color:#0f141a;font-weight:700;">1</span>
<h2 class="t" style="left:623.60px;top:1019.00px;font-size:26px;line-height:34px;letter-spacing:-0.454px;color:#0f141a;font-weight:700;">Step 3: Principals that are allowed access</h2>
<span class="t" style="left:2341.00px;top:1023.50px;font-size:18.25px;line-height:24px;letter-spacing:0.333px;color:#1355d4;font-weight:700;">Edit</span>
<span class="t" style="left:650.60px;top:1090.50px;font-size:23.5px;line-height:31px;letter-spacing:-0.021px;color:#0f141a;font-weight:700;">Share with external principals</span>
<span class="t" style="left:650.60px;top:1148.50px;font-size:18.25px;line-height:24px;letter-spacing:0.225px;color:#0f141a;font-weight:700;">Allow external principals</span>
<span class="t" style="left:650.60px;top:1180.50px;font-size:18.25px;line-height:24px;letter-spacing:0.000px;color:#0f141a;">Yes</span>
<span class="t" style="left:651.20px;top:1277.50px;font-size:23.5px;line-height:31px;letter-spacing:-0.348px;color:#0f141a;font-weight:700;">Principals that are allowed access</span>
<span class="t" style="left:1027.20px;top:1277.50px;font-size:23.5px;line-height:31px;letter-spacing:-0.500px;color:#5d616c;">(1)</span>
<span class="t" style="left:699.90px;top:1346.50px;font-size:18.25px;line-height:24px;letter-spacing:0.354px;color:#5f636e;font-style:italic;">Filter by text</span>
<span class="t" style="left:654.20px;top:1402.50px;font-size:18.25px;line-height:24px;letter-spacing:0.073px;color:#2e323d;font-weight:700;">Principal ID</span>
<span class="t" style="left:1502.00px;top:1402.50px;font-size:18.25px;line-height:24px;letter-spacing:0.212px;color:#2e323d;font-weight:700;">Principal type</span>
<span class="t" style="left:654.40px;top:1452.50px;font-size:18.25px;line-height:24px;letter-spacing:0.800px;color:#0f141a;">123456790123</span>
<span class="t" style="left:1502.20px;top:1452.50px;font-size:18.25px;line-height:24px;letter-spacing:-0.050px;color:#0f141a;">AWS account</span>
<span class="t" style="left:2263.50px;top:1347.50px;font-size:18.25px;line-height:24px;letter-spacing:-1.400px;color:#0f141a;font-weight:700;">1</span>
<span class="t" style="left:1915.25px;top:1560.50px;font-size:18.25px;line-height:24px;letter-spacing:-0.200px;color:#1355d4;font-weight:700;">Cancel</span>
<span class="t" style="left:2041.50px;top:1560.50px;font-size:18.25px;line-height:24px;letter-spacing:-0.143px;color:#1355d4;font-weight:700;">Previous</span>
<span class="t" style="left:2185.75px;top:1560.50px;font-size:18.25px;line-height:24px;letter-spacing:-0.100px;color:#0f141a;font-weight:700;">Create resource share</span>
<span class="t" style="left:1841.00px;top:9.50px;font-size:16.5px;line-height:21px;letter-spacing:0.200px;color:#ffffff;font-weight:700;">5</span>
</div>
</body>
</html>
